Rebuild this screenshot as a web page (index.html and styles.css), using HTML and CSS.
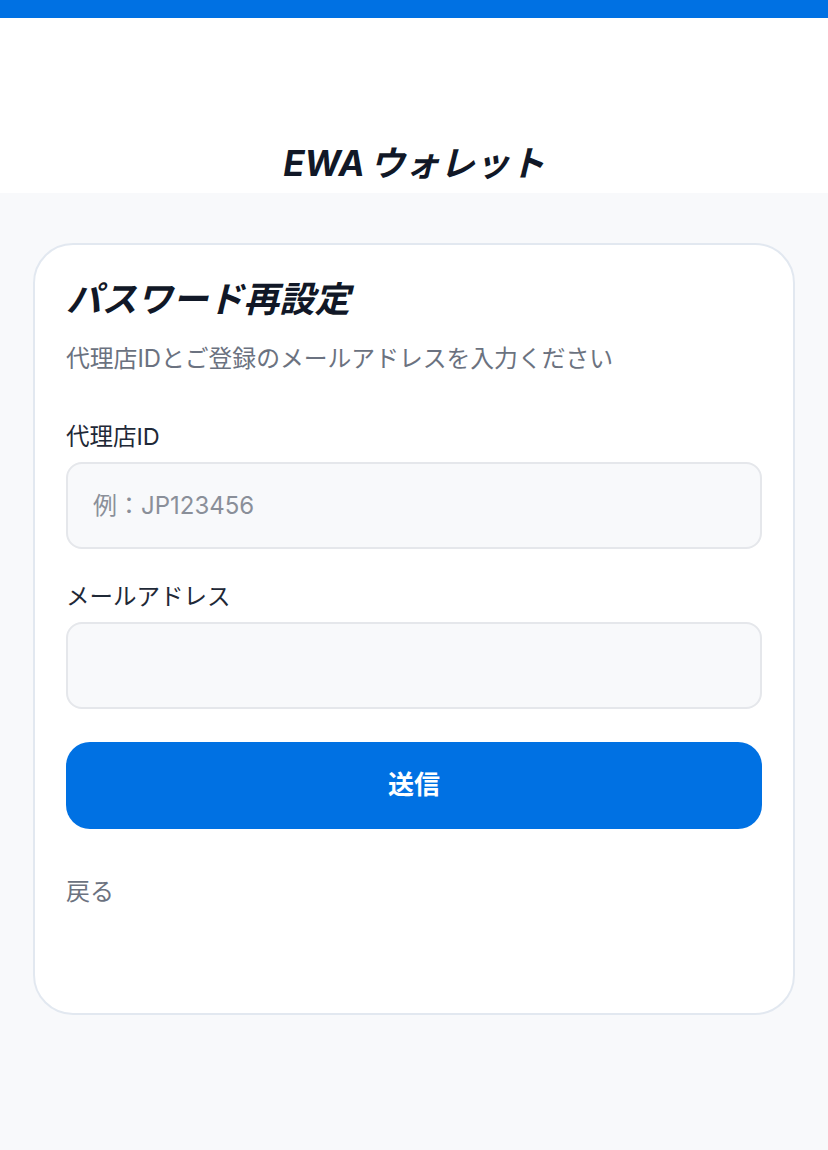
FILE: index.html
```html
<!doctype html>
<html lang="ja">
<head>
<meta charset="utf-8">
<title>パスワード再設定 - EWAウォレット</title>
<link rel="stylesheet" href="styles.css">
</head>
<body>

<div class="topbar"></div>

<header class="header">
	<h1 class="brand">EWA ウォレット</h1>
</header>

<main class="content">
	<section class="card">
		<h2 class="card-title">パスワード再設定</h2>
		<p class="card-lead">代理店IDとご登録のメールアドレスを入力ください</p>

		<form class="reset-form" onsubmit="return false;">
			<label class="field">
				<span class="field-label">代理店ID</span>
				<input class="field-input" type="text" placeholder="例：JP123456">
			</label>
			<label class="field">
				<span class="field-label">メールアドレス</span>
				<input class="field-input" type="email">
			</label>
			<button class="submit" type="submit">送信</button>
		</form>

		<a class="back" href="#">戻る</a>
	</section>
</main>

</body>
</html>
```

FILE: styles.css
```css
body {
	margin: 0;
	background-color: #f8f9fb;
	font-family: Inter, "Noto Sans CJK JP", sans-serif;
	color: #111827;
}

.topbar {
	height: 18px;
	background-color: #0071e3;
}

.header {
	height: 175px;
	background-color: #fff;
	display: flex;
	align-items: flex-end;
	justify-content: center;
	padding-bottom: 8px;
	box-sizing: border-box;
}

.brand {
	margin: 0;
	font-size: 35px;
	line-height: 44px;
	font-weight: 700;
	font-style: italic;
	word-spacing: -3px;
	color: #111827;
}

.content {
	padding: 50px 33px;
}

.card {
	background-color: #fff;
	border: 2px solid #e2e8f0;
	border-radius: 40px;
	padding: 31px 31px 105px;
}

.card-title {
	margin: 0;
	font-size: 35.5px;
	line-height: 48px;
	font-weight: 700;
	font-style: italic;
	color: #111827;
}

.card-lead {
	margin: 19px 0 0;
	font-size: 23.8px;
	line-height: 32px;
	color: #6b7280;
}

.reset-form {
	margin-top: 46px;
}

.field {
	display: block;
	margin-bottom: 32px;
}

.field-label {
	display: block;
	font-size: 23.5px;
	line-height: 32px;
	color: #1f2937;
	margin-bottom: 9px;
}

.field-input {
	display: block;
	width: 100%;
	height: 87px;
	box-sizing: border-box;
	padding: 0 25px;
	background-color: #f8f9fb;
	border: 2px solid #e5e7eb;
	border-radius: 16px;
	font-family: inherit;
	font-size: 24px;
	color: #111827;
	outline: none;
}

.field-input::placeholder {
	color: #8a8f99;
}

.submit {
	display: block;
	width: 100%;
	height: 87px;
	margin-top: 33px;
	padding: 0 0 6px;
	border: none;
	border-radius: 24px;
	background-color: #0071e3;
	color: #fff;
	font-family: inherit;
	font-size: 26px;
	font-weight: 700;
	cursor: pointer;
}

.back {
	display: inline-block;
	margin-top: 47px;
	font-size: 24px;
	line-height: 32px;
	color: #6b7280;
	text-decoration: none;
}
```
